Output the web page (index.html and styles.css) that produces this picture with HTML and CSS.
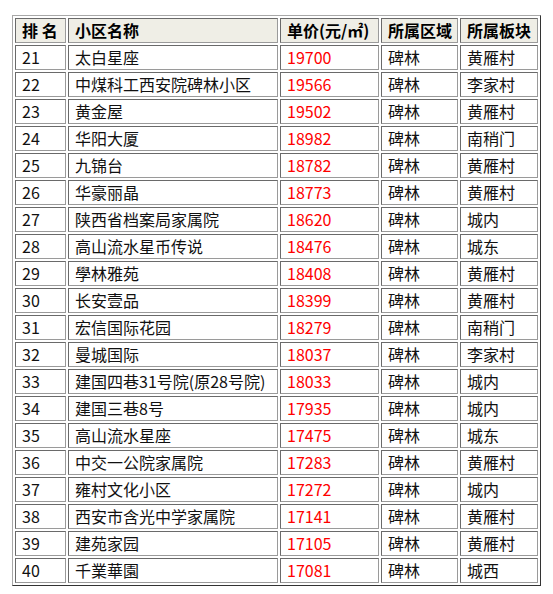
FILE: index.html
```html
<!DOCTYPE html>
<html lang="zh-CN">
<head>
<meta charset="utf-8">
<title>小区单价排名</title>
<link rel="stylesheet" href="styles.css">
</head>
<body>
<table class="rank">
  <thead>
    <tr>
      <th class="c-rank">排 名</th>
      <th class="c-name">小区名称</th>
      <th class="c-price">单价(元/㎡)</th>
      <th class="c-area">所属区域</th>
      <th class="c-block">所属板块</th>
    </tr>
  </thead>
  <tbody>
    <tr><td>21</td><td>太白星座</td><td class="price">19700</td><td>碑林</td><td>黄雁村</td></tr>
    <tr><td>22</td><td>中煤科工西安院碑林小区</td><td class="price">19566</td><td>碑林</td><td>李家村</td></tr>
    <tr><td>23</td><td>黄金屋</td><td class="price">19502</td><td>碑林</td><td>黄雁村</td></tr>
    <tr><td>24</td><td>华阳大厦</td><td class="price">18982</td><td>碑林</td><td>南稍门</td></tr>
    <tr><td>25</td><td>九锦台</td><td class="price">18782</td><td>碑林</td><td>黄雁村</td></tr>
    <tr><td>26</td><td>华豪丽晶</td><td class="price">18773</td><td>碑林</td><td>黄雁村</td></tr>
    <tr><td>27</td><td>陕西省档案局家属院</td><td class="price">18620</td><td>碑林</td><td>城内</td></tr>
    <tr><td>28</td><td>高山流水星币传说</td><td class="price">18476</td><td>碑林</td><td>城东</td></tr>
    <tr><td>29</td><td>學林雅苑</td><td class="price">18408</td><td>碑林</td><td>黄雁村</td></tr>
    <tr><td>30</td><td>长安壹品</td><td class="price">18399</td><td>碑林</td><td>黄雁村</td></tr>
    <tr><td>31</td><td>宏信国际花园</td><td class="price">18279</td><td>碑林</td><td>南稍门</td></tr>
    <tr><td>32</td><td>曼城国际</td><td class="price">18037</td><td>碑林</td><td>李家村</td></tr>
    <tr><td>33</td><td>建国四巷31号院(原28号院)</td><td class="price">18033</td><td>碑林</td><td>城内</td></tr>
    <tr><td>34</td><td>建国三巷8号</td><td class="price">17935</td><td>碑林</td><td>城内</td></tr>
    <tr><td>35</td><td>高山流水星座</td><td class="price">17475</td><td>碑林</td><td>城东</td></tr>
    <tr><td>36</td><td>中交一公院家属院</td><td class="price">17283</td><td>碑林</td><td>黄雁村</td></tr>
    <tr><td>37</td><td>雍村文化小区</td><td class="price">17272</td><td>碑林</td><td>城内</td></tr>
    <tr><td>38</td><td>西安市含光中学家属院</td><td class="price">17141</td><td>碑林</td><td>黄雁村</td></tr>
    <tr><td>39</td><td>建苑家园</td><td class="price">17105</td><td>碑林</td><td>黄雁村</td></tr>
    <tr><td>40</td><td>千業華園</td><td class="price">17081</td><td>碑林</td><td>城西</td></tr>
  </tbody>
</table>
</body>
</html>
```

FILE: styles.css
```css
html, body {
  margin: 0;
  padding: 0;
  background: #ffffff;
}

body {
  font-family: "Noto Sans CJK SC", "Noto Sans", sans-serif;
  font-size: 16px;
  color: #111111;
}

.rank {
  margin: 15px 0 0 12px;
  width: 529px;
  table-layout: fixed;
  border-collapse: separate;
  border-spacing: 2px;
  border: 1px solid;
  border-color: #a8a8a8 #333333 #333333 #a8a8a8;
}

.rank th,
.rank td {
  box-sizing: border-box;
  height: 25px;
  padding: 0 6px;
  line-height: 23px;
  text-align: left;
  vertical-align: middle;
  white-space: nowrap;
  overflow: hidden;
  border: 1px solid;
  border-color: #6a6a6a #9a9a9a #9a9a9a #6a6a6a;
}

.rank th {
  background: #efeee6;
  font-weight: bold;
  color: #000000;
}

.rank td {
  background: #ffffff;
}

.c-rank { width: 51px; }
.c-name { width: 210px; }
.c-price { width: 99px; }
.c-area { width: 77px; }
.c-block { width: 78px; }

.rank td.price {
  color: #ff0000;
}
```
